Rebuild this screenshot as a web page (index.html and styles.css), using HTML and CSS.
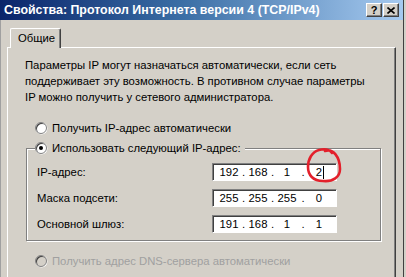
FILE: index.html
```html
<!DOCTYPE html>
<html lang="ru">
<head>
<meta charset="utf-8">
<title>Свойства: Протокол Интернета версии 4 (TCP/IPv4)</title>
<link rel="stylesheet" href="styles.css">
</head>
<body>
<div class="window">
  <div class="titlebar">
    <span class="title">Свойства: Протокол Интернета версии 4 (TCP/IPv4)</span>
    <div class="tbuttons">
      <span class="tbtn help">?</span>
      <span class="tbtn close"><svg width="8" height="7" viewBox="0 0 8 7"><path d="M0.5 0.5 L7.5 6.5 M7.5 0.5 L0.5 6.5" stroke="#000" stroke-width="1.6" fill="none"/></svg></span>
    </div>
  </div>
  <div class="dialog-body">
    <div class="tabs"><div class="tab">Общие</div></div>
    <div class="panel">
      <p class="intro">Параметры IP могут назначаться автоматически, если сеть поддерживает эту возможность. В противном случае параметры IP можно получить у сетевого администратора.</p>
      <div class="radio-row first"><span class="radio"></span><span>Получить IP-адрес автоматически</span></div>
      <fieldset class="group">
        <legend class="legend"><span class="radio checked"></span><span>Использовать следующий IP-адрес:</span></legend>
        <div class="field-row">
          <span class="label">IP-адрес:</span>
          <div class="ipbox">
            <span class="oct">192</span><span class="dot">.</span><span class="oct">168</span><span class="dot">.</span><span class="oct">1</span><span class="dot last">.</span><span class="oct"><span class="caret">2</span></span>
            <svg class="mark" width="42" height="42" viewBox="0 0 42 42"><path d="M22 6 C30 3 37 12 37 24 C37 32 30 37 20 36 C10 36 5 30 5 22 C5 14 9 7 16 5 C20 4 26 4 29 8" stroke="#e3202b" stroke-width="2.6" fill="none" stroke-linecap="round"/></svg>
          </div>
        </div>
        <div class="field-row">
          <span class="label">Маска подсети:</span>
          <div class="ipbox">
            <span class="oct">255</span><span class="dot">.</span><span class="oct">255</span><span class="dot">.</span><span class="oct">255</span><span class="dot last">.</span><span class="oct">0</span>
          </div>
        </div>
        <div class="field-row">
          <span class="label">Основной шлюз:</span>
          <div class="ipbox">
            <span class="oct">191</span><span class="dot">.</span><span class="oct">168</span><span class="dot">.</span><span class="oct">1</span><span class="dot last">.</span><span class="oct">1</span>
          </div>
        </div>
      </fieldset>
      <div class="radio-row disabled"><span class="radio"></span><span>Получить адрес DNS-сервера автоматически</span></div>
    </div>
  </div>
</div>
</body>
</html>
```
FILE: styles.css
```css
html, body {
  margin: 0;
  padding: 0;
}
body {
  width: 406px;
  height: 277px;
  overflow: hidden;
  background: #d4d0c8;
  font-family: "Liberation Sans", Arial, sans-serif;
  font-size: 11.3px;
  color: #000;
}
.window {
  width: 404px;
  height: 277px;
  box-sizing: border-box;
  border-right: 1px solid #404040;
  display: flex;
  flex-direction: column;
}
.titlebar {
  height: 20px;
  flex: none;
  display: flex;
  align-items: center;
  justify-content: space-between;
  padding: 0 4px 0 4px;
  background: linear-gradient(to right, #0a246a 0%, #3a6ea5 45%, #a6caf0 100%);
}
.title {
  color: #fff;
  font-weight: bold;
  font-size: 12.4px;
  white-space: nowrap;
}
.tbuttons {
  display: flex;
  gap: 1px;
}
.tbtn {
  width: 16px;
  height: 14px;
  box-sizing: border-box;
  background: #d4d0c8;
  border-top: 1px solid #fff;
  border-left: 1px solid #fff;
  border-right: 1px solid #404040;
  border-bottom: 1px solid #404040;
  box-shadow: inset -1px -1px 0 #808080;
  display: flex;
  align-items: center;
  justify-content: center;
  font-weight: bold;
  font-size: 11px;
  line-height: 12px;
}
.dialog-body {
  flex: 1;
  display: flex;
  flex-direction: column;
  padding: 8px 7px 0 7px;
  box-shadow: inset 1px 0 0 #a0a0a0;
}
.tabs {
  display: flex;
  padding-left: 3px;
  height: 19px;
  flex: none;
}
.tab {
  position: relative;
  z-index: 1;
  width: 51px;
  height: 20px;
  box-sizing: border-box;
  background: #d4d0c8;
  border-top: 1px solid #fff;
  border-left: 1px solid #fff;
  border-right: 1px solid #404040;
  box-shadow: inset -1px 0 0 #808080;
  border-radius: 2px 2px 0 0;
  padding: 3px 0 0 7px;
}
.panel {
  flex: 1;
  border-top: 1px solid #fff;
  border-left: 1px solid #fff;
  border-right: 1px solid #404040;
  box-shadow: inset -1px 0 0 #808080;
  padding: 9px 0 0 17px;
}
.intro {
  margin: 0;
  line-height: 16px;
  width: 350px;
}
.radio-row {
  display: flex;
  align-items: center;
  gap: 5px;
  height: 16px;
  padding-left: 10px;
}
.radio-row.first {
  margin-top: 15px;
}
.radio {
  width: 12px;
  height: 12px;
  box-sizing: border-box;
  border-radius: 50%;
  background: #fff;
  border: 1px solid #808080;
  box-shadow: inset 1px 1px 0 #404040, 0.5px 0.5px 0 #fff;
  position: relative;
  flex: none;
}
.radio.checked::after {
  content: "";
  position: absolute;
  left: 3px;
  top: 3px;
  width: 4px;
  height: 4px;
  border-radius: 50%;
  background: #000;
}
.group {
  margin: 4px 0 0 1px;
  width: 355px;
  box-sizing: border-box;
  border: 1px solid #808080;
  box-shadow: inset 1px 1px 0 #fff, 1px 1px 0 #fff;
  padding: 0 0 7px 10px;
}
.legend {
  display: flex;
  align-items: center;
  gap: 5px;
  height: 16px;
  padding: 0 4px 0 0;
  margin-left: -2px;
  background: #d4d0c8;
}
.field-row {
  display: flex;
  align-items: center;
  height: 18px;
  margin-top: 8px;
}
.field-row:first-of-type {
  margin-top: 7px;
}
.label {
  width: 175px;
  flex: none;
}
.ipbox {
  position: relative;
  width: 125px;
  height: 18px;
  box-sizing: border-box;
  background: #fff;
  border-top: 1px solid #808080;
  border-left: 1px solid #808080;
  border-right: 1px solid #fff;
  border-bottom: 1px solid #fff;
  box-shadow: inset 1px 1px 0 #404040, 1px 1px 0 #d4d0c8;
  display: flex;
  align-items: center;
  padding-left: 4px;
}
.oct {
  width: 24px;
  text-align: center;
  flex: none;
}
.dot {
  width: 5px;
  text-align: center;
  flex: none;
}
.dot.last {
  width: 8px;
}
.caret {
  position: relative;
}
.caret::after {
  content: "";
  position: absolute;
  right: -2px;
  top: 0;
  width: 1px;
  height: 13px;
  background: #000;
}
.mark {
  position: absolute;
  left: 90px;
  top: -19px;
}
.radio-row.disabled {
  margin-top: 12px;
  color: #a0a0a0;
}
.radio-row.disabled .radio {
  background: #d4d0c8;
}
```
